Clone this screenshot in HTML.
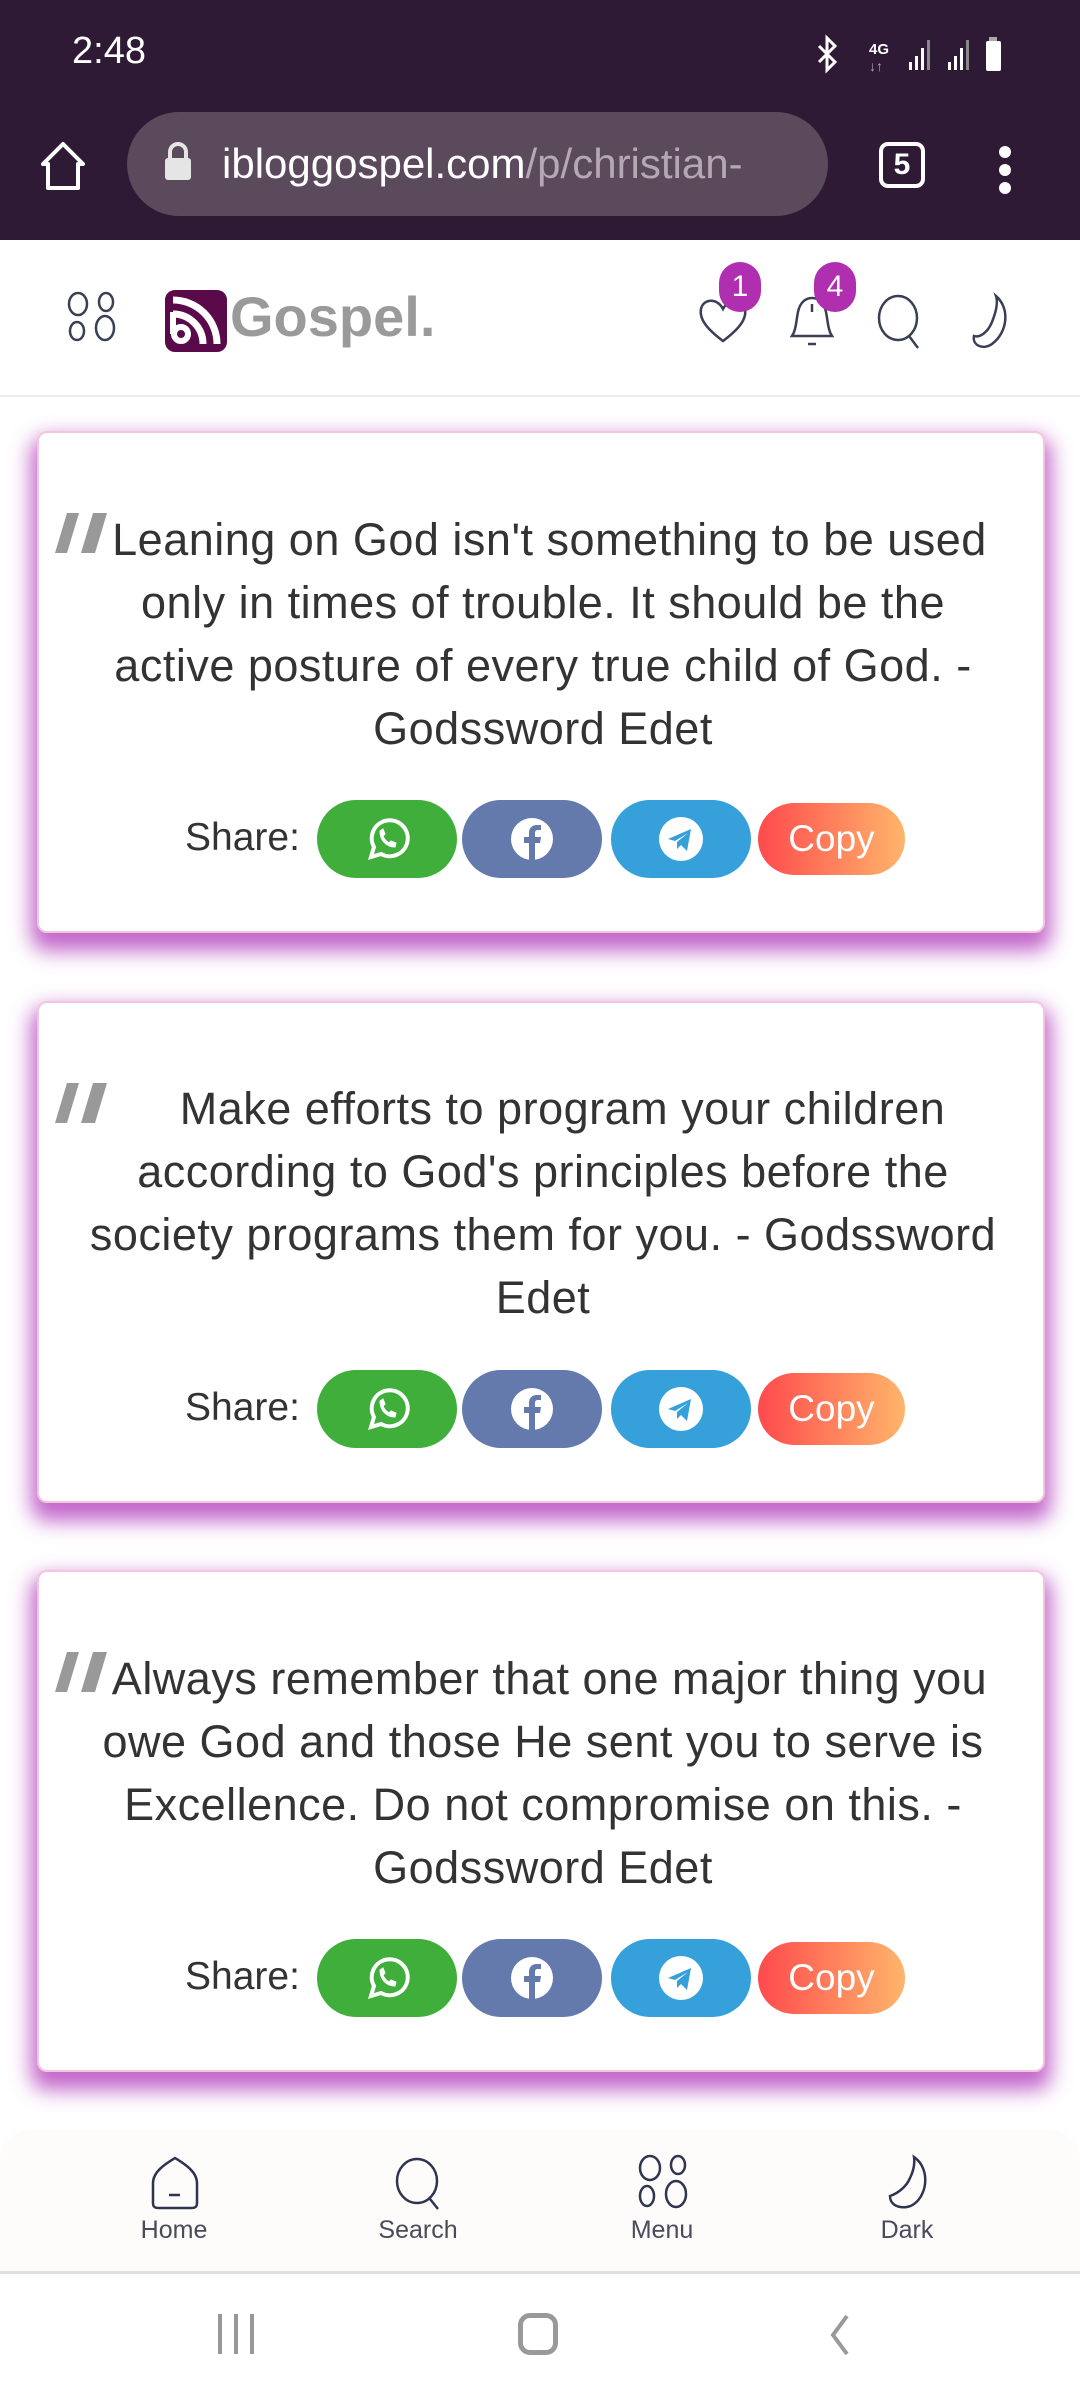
<!DOCTYPE html>
<html><head><meta charset="utf-8"><style>
*{margin:0;padding:0;box-sizing:border-box}
body{width:1080px;height:2400px;position:relative;overflow:hidden;background:#fff;font-family:"Liberation Sans",sans-serif}
.top{position:absolute;left:0;top:0;width:1080px;height:240px;background:#2f1a35}
.time{position:absolute;left:72px;top:30px;color:#fff;font-size:38px}
.url{position:absolute;left:127px;top:112px;width:701px;height:104px;border-radius:52px;background:#5b4a5c}
.url span{position:absolute;left:95px;top:28px;font-size:42px;color:#fff;white-space:nowrap}
.url span i{font-style:normal;color:#b3a8b4}
.hdr{position:absolute;left:0;top:240px;width:1080px;height:157px;border-bottom:2px solid #e8eef2;background:#fff}
.logo-t{position:absolute;left:230px;top:44px;font-size:56px;font-weight:bold;color:#9a9a9a}
.badge{position:absolute;width:42px;height:50px;border-radius:21px;background:#b02fb0;color:#fff;font-size:30px;text-align:center;line-height:50px}
.card{position:absolute;left:37px;width:1008px;height:502px;background:#fff;border-radius:10px;border:2px solid #f4c6dc;box-shadow:0 12px 20px 6px rgba(180,65,190,.8)}
.q{position:absolute;left:16px}
.txt{position:absolute;left:0;width:1008px;text-align:center;font-size:45px;letter-spacing:.5px;line-height:63px;color:#333;white-space:nowrap}
.share{position:absolute;top:367px;left:0;width:1008px;height:78px}
.share .lbl{position:absolute;left:146px;top:16px;font-size:39px;color:#333}
.btn{position:absolute;top:0;width:140px;height:78px;border-radius:39px;display:flex;align-items:center;justify-content:center}
.copy{position:absolute;left:719px;top:3px;width:147px;height:72px;border-radius:36px;background:linear-gradient(90deg,#ff4a4d,#ffb56b);color:#fff;font-size:37px;text-align:center;line-height:72px}
.bnav{position:absolute;left:0;top:2130px;width:1080px;height:144px;background:#fdfcfb;border-radius:30px 30px 0 0;border-bottom:3px solid #e0e0e0}
.bnav .it{position:absolute;top:0;width:160px;text-align:center}
.bnav .it div{font-size:25px;color:#4a4a5a;position:absolute;top:86px;width:160px}
.sys{position:absolute;left:0;top:2276px;width:1080px;height:124px;background:#fff}
</style></head><body>
<div class="top">
<div class="time">2:48</div>
<svg style="position:absolute;left:815px;top:34px" width="200" height="40" viewBox="0 0 200 40">
<path d="M4 12 L20 28 L12 36 L12 4 L20 12 L4 28" stroke="#fff" stroke-width="3" fill="none"/>
<text x="54" y="20" fill="#fff" font-size="15" font-family="Liberation Sans" font-weight="bold">4G</text>
<text x="54" y="37" fill="#aaa" font-size="14" font-family="Liberation Sans">↓↑</text>
<rect x="94" y="28" width="3" height="8" fill="#fff"/><rect x="100" y="22" width="3" height="14" fill="#fff"/><rect x="106" y="14" width="3" height="22" fill="#fff"/><rect x="112" y="6" width="3" height="30" fill="#888"/>
<rect x="133" y="28" width="3" height="8" fill="#fff"/><rect x="139" y="22" width="3" height="14" fill="#fff"/><rect x="145" y="14" width="3" height="22" fill="#fff"/><rect x="151" y="6" width="3" height="30" fill="#888"/>
<rect x="174" y="3" width="8" height="5" fill="#aaa"/><rect x="171" y="7" width="15" height="30" rx="2" fill="#fff"/>
</svg>
<svg style="position:absolute;left:38px;top:140px" width="50" height="52" viewBox="0 0 50 52"><path d="M5 24 L25 4 L45 24 L40 24 L40 48 L10 48 L10 24 Z" fill="none" stroke="#fff" stroke-width="4" stroke-linejoin="round"/></svg>
<div class="url"><svg style="position:absolute;left:36px;top:30px" width="30" height="40"><path d="M7 16 V10 a8 8 0 0 1 16 0 V16" stroke="#e5e5e5" stroke-width="4" fill="none"/><rect x="2" y="16" width="26" height="22" rx="3" fill="#e5e5e5"/></svg><span>ibloggospel.com<i>/p/christian-</i></span></div>
<div style="position:absolute;left:879px;top:142px;width:46px;height:46px;border:4px solid #fff;border-radius:9px;color:#fff;font-size:30px;text-align:center;line-height:38px;font-weight:bold">5</div>
<div style="position:absolute;left:999px;top:146px;width:12px;height:12px;border-radius:6px;background:#fff"></div>
<div style="position:absolute;left:999px;top:164px;width:12px;height:12px;border-radius:6px;background:#fff"></div>
<div style="position:absolute;left:999px;top:182px;width:12px;height:12px;border-radius:6px;background:#fff"></div>
</div>
<div class="hdr">
<svg style="position:absolute;left:66px;top:50px" width="52" height="52" viewBox="0 0 52 52" fill="none" stroke="#3a3f55" stroke-width="2.5"><ellipse cx="12" cy="14" rx="9" ry="11"/><ellipse cx="40" cy="12" rx="7" ry="9"/><ellipse cx="11" cy="41" rx="7" ry="9"/><ellipse cx="39" cy="38" rx="9" ry="12"/></svg>
<svg style="position:absolute;left:165px;top:50px" width="62" height="62" viewBox="0 0 62 62"><rect x="0" y="0" width="62" height="62" rx="10" fill="#5a0a4a"/><circle cx="16" cy="44" r="7" fill="none" stroke="#fff" stroke-width="6"/><path d="M8 10 A44 44 0 0 1 52 54" stroke="#fff" stroke-width="7" fill="none"/><path d="M8 24 A30 30 0 0 1 38 54" stroke="#fff" stroke-width="7" fill="none"/><path d="M8 22 V44" stroke="#fff" stroke-width="6"/></svg>
<div class="logo-t">Gospel.</div>
<svg style="position:absolute;left:697px;top:55px" width="52" height="50" viewBox="0 0 52 50" fill="none" stroke="#3a3f55" stroke-width="2.5"><path d="M26 46 C10 34 2 24 4 14 C6 4 20 2 26 14 C32 2 46 4 48 14 C50 24 42 34 26 46Z"/></svg>
<div class="badge" style="left:719px;top:22px">1</div>
<svg style="position:absolute;left:786px;top:52px" width="52" height="60" viewBox="0 0 52 60" fill="none" stroke="#3a3f55" stroke-width="2.5"><path d="M6 44 C10 38 10 30 12 20 C14 10 20 6 26 6 C32 6 38 10 40 20 C42 30 42 38 46 44 Z"/><path d="M22 52 H30"/><path d="M26 12 V20"/></svg>
<div class="badge" style="left:814px;top:22px">4</div>
<svg style="position:absolute;left:876px;top:52px" width="50" height="60" viewBox="0 0 50 60" fill="none" stroke="#3a3f55" stroke-width="2.5"><ellipse cx="22" cy="26" rx="19" ry="22"/><path d="M33 44 L42 56"/></svg>
<svg style="position:absolute;left:966px;top:52px" width="50" height="60" viewBox="0 0 50 60" fill="none" stroke="#3a3f55" stroke-width="2.5"><path d="M30 4 C44 16 42 40 26 52 C18 58 6 54 8 44 C14 46 22 40 26 30 C30 20 32 10 30 4Z"/></svg>
</div>

<div class="card" style="top:431px">
<svg class="q" style="top:80px" width="54" height="42" viewBox="0 0 54 42"><path d="M12 0 H24 L12 40 H0Z M38 0 H52 L40 40 H26Z" fill="#999"/></svg>
<div class="txt" style="top:75px">&nbsp;Leaning on God isn't something to be used<br>only in times of trouble. It should be the<br>active posture of every true child of God. -<br>Godssword Edet</div>
<div class="share"><div class="lbl">Share:</div>
<div class="btn" style="left:278px;background:#40ae3a"><svg width="48" height="48" viewBox="0 0 48 48" fill="none" stroke="#fff" stroke-width="4"><path d="M8 42 L11 32 A18 18 0 1 1 18 39 Z"/><path d="M17 16 C17 26 24 32 32 32 L33 28 L28 26 L26 28 C23 26 21 24 20 21 L22 19 L20 14Z" fill="#fff" stroke-width="1"/></svg></div>
<div class="btn" style="left:423px;background:#647aad"><svg width="48" height="48" viewBox="0 0 48 48"><circle cx="24" cy="24" r="21" fill="#fff"/><path d="M27 46 V28 H32 L33 22 H27 V18 C27 16 28 15 30 15 H33 V10 H29 C24 10 21 13 21 18 V22 H16 V28 H21 V46Z" fill="#647aad"/></svg></div>
<div class="btn" style="left:572px;background:#35a0d9"><svg width="48" height="48" viewBox="0 0 48 48"><circle cx="24" cy="24" r="22" fill="#fff"/><path d="M11 24 L34 14 L30 36 L24 30 L20 34 L20 27 L31 18 L18 26 Z" fill="#35a0d9"/></svg></div>
<div class="copy">Copy</div></div>
</div>

<div class="card" style="top:1001px">
<svg class="q" style="top:80px" width="54" height="42" viewBox="0 0 54 42"><path d="M12 0 H24 L12 40 H0Z M38 0 H52 L40 40 H26Z" fill="#999"/></svg>
<div class="txt" style="top:74px">&nbsp;&nbsp;&nbsp;Make efforts to program your children<br>according to God's principles before the<br>society programs them for you. - Godssword<br>Edet</div>
<div class="share"><div class="lbl">Share:</div>
<div class="btn" style="left:278px;background:#40ae3a"><svg width="48" height="48" viewBox="0 0 48 48" fill="none" stroke="#fff" stroke-width="4"><path d="M8 42 L11 32 A18 18 0 1 1 18 39 Z"/><path d="M17 16 C17 26 24 32 32 32 L33 28 L28 26 L26 28 C23 26 21 24 20 21 L22 19 L20 14Z" fill="#fff" stroke-width="1"/></svg></div>
<div class="btn" style="left:423px;background:#647aad"><svg width="48" height="48" viewBox="0 0 48 48"><circle cx="24" cy="24" r="21" fill="#fff"/><path d="M27 46 V28 H32 L33 22 H27 V18 C27 16 28 15 30 15 H33 V10 H29 C24 10 21 13 21 18 V22 H16 V28 H21 V46Z" fill="#647aad"/></svg></div>
<div class="btn" style="left:572px;background:#35a0d9"><svg width="48" height="48" viewBox="0 0 48 48"><circle cx="24" cy="24" r="22" fill="#fff"/><path d="M11 24 L34 14 L30 36 L24 30 L20 34 L20 27 L31 18 L18 26 Z" fill="#35a0d9"/></svg></div>
<div class="copy">Copy</div></div>
</div>

<div class="card" style="top:1570px">
<svg class="q" style="top:80px" width="54" height="42" viewBox="0 0 54 42"><path d="M12 0 H24 L12 40 H0Z M38 0 H52 L40 40 H26Z" fill="#999"/></svg>
<div class="txt" style="top:75px">&nbsp;Always remember that one major thing you<br>owe God and those He sent you to serve is<br>Excellence. Do not compromise on this. -<br>Godssword Edet</div>
<div class="share"><div class="lbl">Share:</div>
<div class="btn" style="left:278px;background:#40ae3a"><svg width="48" height="48" viewBox="0 0 48 48" fill="none" stroke="#fff" stroke-width="4"><path d="M8 42 L11 32 A18 18 0 1 1 18 39 Z"/><path d="M17 16 C17 26 24 32 32 32 L33 28 L28 26 L26 28 C23 26 21 24 20 21 L22 19 L20 14Z" fill="#fff" stroke-width="1"/></svg></div>
<div class="btn" style="left:423px;background:#647aad"><svg width="48" height="48" viewBox="0 0 48 48"><circle cx="24" cy="24" r="21" fill="#fff"/><path d="M27 46 V28 H32 L33 22 H27 V18 C27 16 28 15 30 15 H33 V10 H29 C24 10 21 13 21 18 V22 H16 V28 H21 V46Z" fill="#647aad"/></svg></div>
<div class="btn" style="left:572px;background:#35a0d9"><svg width="48" height="48" viewBox="0 0 48 48"><circle cx="24" cy="24" r="22" fill="#fff"/><path d="M11 24 L34 14 L30 36 L24 30 L20 34 L20 27 L31 18 L18 26 Z" fill="#35a0d9"/></svg></div>
<div class="copy">Copy</div></div>
</div>

<div class="bnav">
<div class="it" style="left:94px"><svg style="position:absolute;left:55px;top:25px" width="52" height="56" viewBox="0 0 52 56" fill="none" stroke="#2f3550" stroke-width="2.5"><path d="M26 3 C18 8 4 16 4 28 V48 C4 52 6 53 10 53 H42 C46 53 48 52 48 48 V28 C48 16 34 8 26 3Z"/><path d="M20 40 H31"/></svg><div>Home</div></div>
<div class="it" style="left:338px"><svg style="position:absolute;left:56px;top:25px" width="50" height="56" viewBox="0 0 50 56" fill="none" stroke="#2f3550" stroke-width="2.5"><ellipse cx="23" cy="26" rx="20" ry="22"/><path d="M36 44 L44 54"/></svg><div>Search</div></div>
<div class="it" style="left:582px"><svg style="position:absolute;left:54px;top:22px" width="54" height="58" viewBox="0 0 54 58" fill="none" stroke="#2f3550" stroke-width="2.5"><ellipse cx="14" cy="16" rx="10" ry="12"/><ellipse cx="42" cy="13" rx="7" ry="9"/><ellipse cx="11" cy="44" rx="7" ry="10"/><ellipse cx="40" cy="42" rx="10" ry="13"/></svg><div>Menu</div></div>
<div class="it" style="left:827px"><svg style="position:absolute;left:57px;top:24px" width="50" height="56" viewBox="0 0 50 56" fill="none" stroke="#2f3550" stroke-width="2.5"><path d="M30 3 C46 14 44 40 30 50 C22 56 6 54 6 42 C12 40 22 34 26 24 C30 16 31 10 30 3Z"/></svg><div>Dark</div></div>
</div>
<div class="sys">
<div style="position:absolute;left:218px;top:38px;width:4px;height:40px;background:#999"></div>
<div style="position:absolute;left:234px;top:38px;width:4px;height:40px;background:#999"></div>
<div style="position:absolute;left:250px;top:38px;width:4px;height:40px;background:#999"></div>
<div style="position:absolute;left:518px;top:37px;width:40px;height:42px;border:5px solid #999;border-radius:12px"></div>
<svg style="position:absolute;left:825px;top:36px" width="30" height="46"><path d="M22 4 L8 23 L22 42" stroke="#999" stroke-width="4" fill="none"/></svg>
</div>
</body></html>
